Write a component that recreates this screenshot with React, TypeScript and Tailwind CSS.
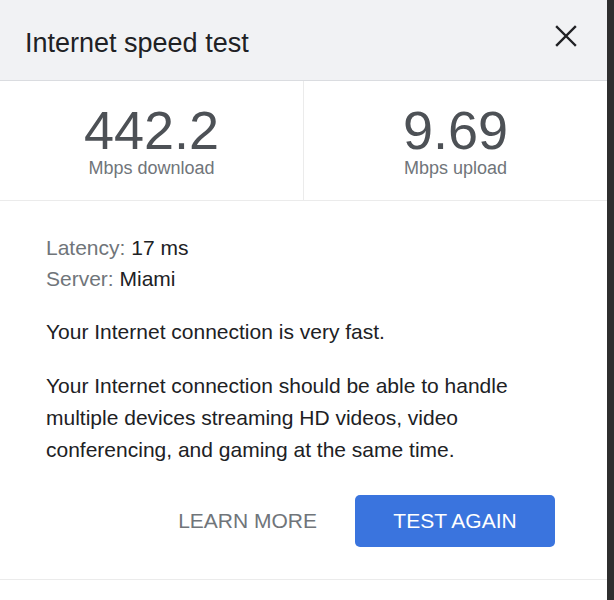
export default function App() {
  return (
    <div className="flex h-[600px] w-[614px] bg-white font-['Liberation_Sans',Arial,sans-serif] text-[#202124]">
      <div className="flex w-[607px] flex-col bg-white">
        {/* header */}
        <div className="flex h-[81px] items-center justify-between border-b border-[#dadce0] bg-[#f1f2f4] pl-[25px] pr-[29px]">
          <h1 className="pt-[6px] text-[27px] leading-[32px] text-[#202124]">Internet speed test</h1>
          <button className="mb-[8px] flex h-[24px] w-[24px] items-center justify-center text-[#202124]">
            <svg width="22" height="22" viewBox="0 0 22 22" fill="none" stroke="currentColor" strokeWidth="2.4" strokeLinecap="square">
              <path d="M2 2L20 20M20 2L2 20" />
            </svg>
          </button>
        </div>

        {/* results */}
        <div className="flex h-[120px] border-b border-[#ebebeb]">
          <Stat value="442.2" label="Mbps download" className="border-r border-[#ebebeb]" />
          <Stat value="9.69" label="Mbps upload" />
        </div>

        {/* details */}
        <div className="flex flex-col border-b border-[#ebebeb] pb-[32px] pl-[46px] pr-[52px] pt-[31px] text-[21px]">
          <p className="leading-[31px]">
            <span className="text-[#70757a]">Latency: </span>17 ms
          </p>
          <p className="leading-[31px]">
            <span className="text-[#70757a]">Server: </span>Miami
          </p>
          <p className="mt-[22px] leading-[31px]">Your Internet connection is very fast.</p>
          <p className="mt-[23px] leading-[32px]">
            Your Internet connection should be able to handle multiple devices streaming HD videos, video conferencing, and gaming at the same time.
          </p>
          <div className="mt-[29px] flex items-center justify-end gap-[38px]">
            <button className="text-[21px] text-[#70757a]">LEARN MORE</button>
            <button className="flex h-[52px] w-[200px] items-center justify-center rounded-[5px] bg-[#3a74de] text-[21px] text-white">
              TEST AGAIN
            </button>
          </div>
        </div>
      </div>
      <div className="flex-1 bg-[#2e2e2e]" />
    </div>
  );
}

function Stat({ value, label, className = "" }: { value: string; label: string; className?: string }) {
  return (
    <div className={`flex flex-1 flex-col items-center pt-[22px] ${className}`}>
      <div className="text-[54px] leading-[54px] text-[#4d5156]">{value}</div>
      <div className="mt-[2px] text-[18px] leading-[18px] text-[#70757a]">{label}</div>
    </div>
  );
}
